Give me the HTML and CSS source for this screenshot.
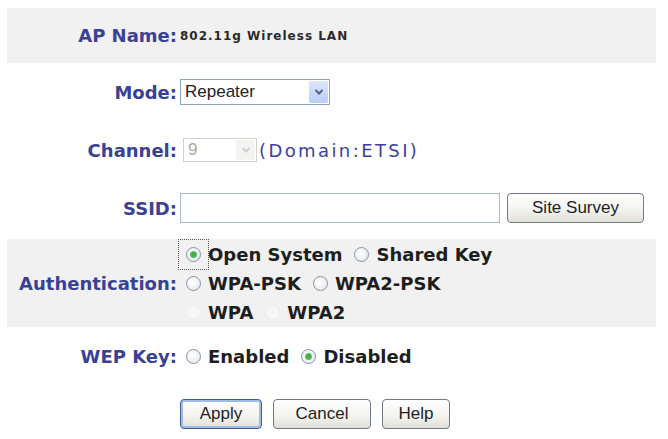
FILE: index.html
```html
<!DOCTYPE html>
<html lang="en">
<head>
  <meta charset="UTF-8">
  <title>Wireless Setup</title>
  <link rel="stylesheet" href="styles.css">
</head>
<body>
  <form class="setup">
    <div class="row shade first">
      <span class="label">AP Name:</span>
      <span class="apname">802.11g Wireless LAN</span>
    </div>

    <div class="row">
      <span class="label">Mode:</span>
      <span class="select mode">
        <span class="value">Repeater</span>
        <span class="arrow"><svg width="10" height="8" viewBox="0 0 10 8"><path d="M1.5 2 L5 5.5 L8.5 2" fill="none" stroke="#4d6185" stroke-width="2"/></svg></span>
      </span>
    </div>

    <div class="row">
      <span class="label">Channel:</span>
      <span class="select channel off">
        <span class="value">9</span>
        <span class="arrow"><svg width="10" height="8" viewBox="0 0 10 8"><path d="M1.5 2 L5 5.5 L8.5 2" fill="none" stroke="#c9cdd6" stroke-width="2"/></svg></span>
      </span>
      <span class="domain">(Domain:ETSI)</span>
    </div>

    <div class="row">
      <span class="label">SSID:</span>
      <input class="ssid" type="text">
      <button type="button" class="btn survey">Site Survey</button>
    </div>

    <div class="row shade auth">
      <span class="label">Authentication:</span>
      <div class="choices">
        <div class="line">
          <label class="opt"><span class="radio on focus"></span>Open System</label>
          <label class="opt"><span class="radio"></span>Shared Key</label>
        </div>
        <div class="line">
          <label class="opt"><span class="radio"></span>WPA-PSK</label>
          <label class="opt"><span class="radio"></span>WPA2-PSK</label>
        </div>
        <div class="line">
          <label class="opt"><span class="radio dim"></span>WPA</label>
          <label class="opt"><span class="radio dim"></span>WPA2</label>
        </div>
      </div>
    </div>

    <div class="row">
      <span class="label">WEP Key:</span>
      <label class="opt"><span class="radio"></span>Enabled</label>
      <label class="opt"><span class="radio on"></span>Disabled</label>
    </div>

    <div class="row actions">
      <button type="button" class="btn apply">Apply</button>
      <button type="button" class="btn cancel">Cancel</button>
      <button type="button" class="btn help">Help</button>
    </div>
  </form>
</body>
</html>
```

FILE: styles.css
```css
/* Bas */
body {
  margin: 0;
  background-color: #ffffff;
  font-family: 'DejaVu Sans', Verdana, sans-serif;
  overflow: hidden;
}

.setup {
  width: 649px;
  margin: 8px 0 0 7px;
}

/* Rader */
.row {
  display: flex;
  align-items: center;
  height: 58px;
}

.row.first {
  height: 55px;
}

.shade {
  background-color: #f1f1f1;
}

.label {
  width: 170px;
  flex: none;
  text-align: right;
  margin-right: 3px;
  font-size: 18px;
  font-weight: bold;
  color: #3a4194;
}

.apname {
  font-size: 12px;
  font-weight: bold;
  letter-spacing: 1px;
  color: #2a2a2a;
}

/* Listrutor */
.select {
  position: relative;
  display: flex;
  align-items: center;
  height: 26px;
  box-sizing: border-box;
  border: 1px solid #8fa3bf;
  background-color: #ffffff;
  font-family: 'Liberation Sans', Arial, sans-serif;
  font-size: 17px;
  color: #222222;
  padding-left: 4px;
}

.select.mode {
  width: 150px;
}

.select.channel {
  width: 74px;
  height: 24px;
  margin-left: 3px;
}

.select.off {
  border-color: #d4d2c8;
  color: #a8a8a8;
}

.select .arrow {
  position: absolute;
  top: 1px;
  right: 1px;
  bottom: 1px;
  width: 19px;
  display: flex;
  align-items: center;
  justify-content: center;
  background: linear-gradient(#dbe6fd, #b8cdf6);
  border-radius: 2px;
}

.select.off .arrow {
  background: #f3f3f0;
}

.domain {
  margin-left: 2px;
  font-size: 18px;
  letter-spacing: 2.4px;
  color: #3b3fa0;
}

/* SSID */
.ssid {
  width: 320px;
  height: 30px;
  box-sizing: border-box;
  margin: 0;
  border: 1px solid #a9b6c6;
  background-color: #ffffff;
}

/* Knappar */
.btn {
  height: 30px;
  box-sizing: border-box;
  border: 1px solid #6f7a86;
  border-radius: 4px;
  background: linear-gradient(#ffffff, #f2f2ee 60%, #e1e0d8);
  font-family: 'Liberation Sans', Arial, sans-serif;
  font-size: 17px;
  color: #222222;
  padding: 0;
}

.survey {
  width: 137px;
  margin-left: 7px;
}

.actions {
  height: 50px;
  align-items: flex-start;
  box-sizing: border-box;
  padding: 14px 0 0 173px;
  gap: 11px;
}

.apply {
  width: 82px;
  box-shadow: inset 0 0 0 2px #9fbbe8;
  border-color: #3f5f95;
}

.cancel {
  width: 98px;
}

.help {
  width: 68px;
}

/* Radioknappar */
.auth {
  height: 88px;
  margin-top: 2px;
}

.choices {
  display: flex;
  flex-direction: column;
  gap: 3px;
}

.line {
  display: flex;
  height: 26px;
  align-items: center;
}

.opt {
  display: flex;
  align-items: center;
  font-size: 18px;
  font-weight: bold;
  color: #1e1e1e;
  margin-right: 6px;
}

.radio {
  position: relative;
  width: 15px;
  height: 15px;
  flex: none;
  box-sizing: border-box;
  border: 1px solid #8193a8;
  border-radius: 50%;
  background: radial-gradient(circle at 40% 40%, #ffffff, #e2e4e8);
  margin: 0 7px 0 6px;
  display: flex;
  align-items: center;
  justify-content: center;
}

.radio.focus::before {
  content: '';
  position: absolute;
  left: -9px;
  top: -9px;
  width: 31px;
  height: 31px;
  box-sizing: border-box;
  border: 1px dotted #555555;
}

.radio.on::after {
  content: '';
  width: 7px;
  height: 7px;
  border-radius: 50%;
  background: radial-gradient(circle, #46b046 40%, #8fd08f);
}

.radio.dim {
  border-color: #ececec;
  background: #f7f7f7;
}
```
